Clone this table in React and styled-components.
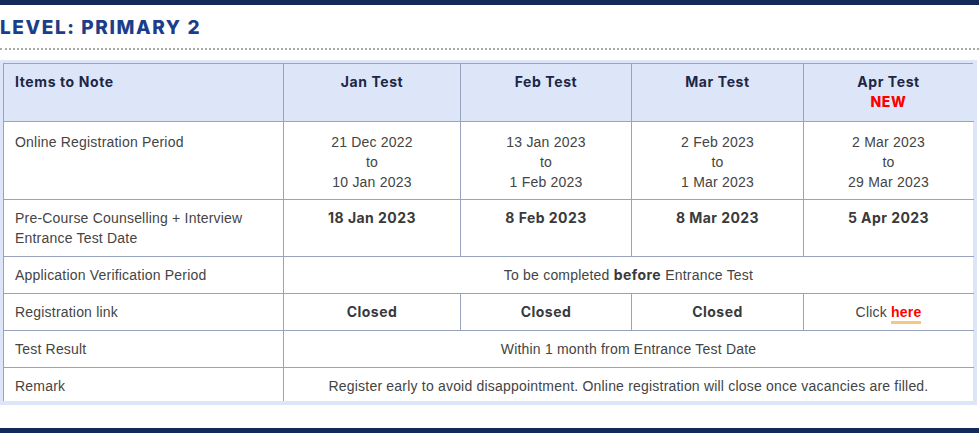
import React from "react";
import styled, { createGlobalStyle } from "styled-components";

const Global = createGlobalStyle`
  html, body { margin: 0; padding: 0; background: #fff; }
  body { font-family: "Liberation Sans", Arial, sans-serif; }
`;

const Page = styled.div`
  width: 979px;
  display: flex;
  flex-direction: column;
`;

const Bar = styled.div`
  height: 5px;
  background: #13295a;
  margin-top: ${(p) => p.$mt || 0}px;
`;

const Title = styled.h2`
  margin: 0;
  padding: 12px 0 0 0;
  height: 31px;
  font-family: "Inter", "Open Sans", sans-serif;
  font-weight: 800;
  font-size: 19px;
  line-height: 22px;
  letter-spacing: 1.6px;
  color: #1c3d89;
`;

const Divider = styled.div`
  border-bottom: 2px dotted #aaaaaa;
  margin-bottom: 10px;
`;

const TableWrap = styled.div`
  width: 970px;
  background: #dde6f8;
  padding: 3px 4px 4px 3px;
`;

const Table = styled.table`
  width: 970px;
  border-collapse: collapse;
  table-layout: fixed;
  font-family: "Liberation Sans", Arial, sans-serif;
  font-size: 14px;
  letter-spacing: 0.2px;
  color: #444;
  background: #fff;
`;

const Th = styled.th`
  background: #dde6f8;
  border: 1px solid #9aa3bd;
  padding: 8px 11px 9px;
  vertical-align: top;
  text-align: ${(p) => (p.$left ? "left" : "center")};
  font-family: "Inter", "Open Sans", sans-serif;
  font-weight: 700;
  font-size: 14px;
  line-height: 20px;
  letter-spacing: 0.6px;
  color: #1c2646;
  &:last-child { border-right-color: #dde6f8; }
`;

const Td = styled.td`
  border: 1px solid #9aa3bd;
  padding: ${(p) => (p.$tall ? "10px 11px 7px" : p.$last ? "8px 11px 5px" : "8px 11px")};
  vertical-align: top;
  line-height: 20px;
  text-align: ${(p) => (p.$left ? "left" : "center")};
  color: #444;
  ${(p) => (p.$last ? "border-bottom: none;" : "")}
  &:last-child { border-right-color: #dde6f8; }
`;

const Strong = styled.span`
  font-family: "Inter", "Open Sans", sans-serif;
  font-weight: 700;
  letter-spacing: 0.45px;
  color: #3a3a3a;
`;

const New = styled.div`
  color: #ff0000;
  font-weight: 800;
`;

const Link = styled.a`
  color: #ff0000;
  font-weight: 700;
  text-decoration: none;
  border-bottom: 3px solid #f5c97b;
  padding-bottom: 1px;
`;

const widths = [280, 177, 171, 172, 170];

const dates = [
  ["21 Dec 2022", "10 Jan 2023"],
  ["13 Jan 2023", "1 Feb 2023"],
  ["2 Feb 2023", "1 Mar 2023"],
  ["2 Mar 2023", "29 Mar 2023"],
];

export default function App() {
  return (
    <Page>
      <Global />
      <Bar />
      <Title>LEVEL: PRIMARY 2</Title>
      <Divider />
      <TableWrap>
        <Table>
          <colgroup>
            {widths.map((w, i) => (
              <col key={i} style={{ width: w }} />
            ))}
          </colgroup>
          <thead>
            <tr>
              <Th $left>Items to Note</Th>
              <Th>Jan Test</Th>
              <Th>Feb Test</Th>
              <Th>Mar Test</Th>
              <Th>
                Apr Test
                <New>NEW</New>
              </Th>
            </tr>
          </thead>
          <tbody>
            <tr>
              <Td $left $tall>Online Registration Period</Td>
              {dates.map(([a, b], i) => (
                <Td key={i} $tall>
                  {a}
                  <br />
                  to
                  <br />
                  {b}
                </Td>
              ))}
            </tr>
            <tr>
              <Td $left>
                Pre-Course Counselling + Interview
                <br />
                Entrance Test Date
              </Td>
              <Td><Strong>18 Jan 2023</Strong></Td>
              <Td><Strong>8 Feb 2023</Strong></Td>
              <Td><Strong>8 Mar 2023</Strong></Td>
              <Td><Strong>5 Apr 2023</Strong></Td>
            </tr>
            <tr>
              <Td $left>Application Verification Period</Td>
              <Td colSpan={4}>
                To be completed <Strong>before</Strong> Entrance Test
              </Td>
            </tr>
            <tr>
              <Td $left>Registration link</Td>
              <Td><Strong>Closed</Strong></Td>
              <Td><Strong>Closed</Strong></Td>
              <Td><Strong>Closed</Strong></Td>
              <Td>
                Click <Link href="#">here</Link>
              </Td>
            </tr>
            <tr>
              <Td $left>Test Result</Td>
              <Td colSpan={4}>Within 1 month from Entrance Test Date</Td>
            </tr>
            <tr>
              <Td $left $last>Remark</Td>
              <Td colSpan={4} $last>
                Register early to avoid disappointment. Online registration will close once vacancies are filled.
              </Td>
            </tr>
          </tbody>
        </Table>
      </TableWrap>
      <Bar $mt={23} />
    </Page>
  );
}
